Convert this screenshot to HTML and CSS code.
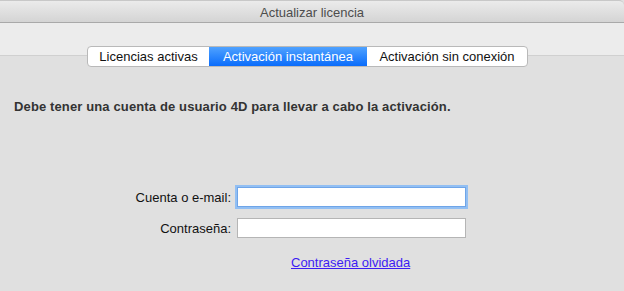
FILE: index.html
```html
<!DOCTYPE html>
<html>
<head>
    <meta charset="utf-8">
    <link rel="stylesheet" href="styles.css">
</head>
<body>
<div id="window">
    <div id="titlebar">Actualizar licencia</div>
    <div id="toolbar"></div>
    <div id="tabs">
        <span class="tab first">Licencias activas</span>
        <span class="tab second selected">Activación instantánea</span>
        <span class="tab third">Activación sin conexión</span>
    </div>
    <div id="content">
        <p class="notice">Debe tener una cuenta de usuario 4D para llevar a cabo la activación.</p>
        <div class="form">
            <div class="row">
                <label class="lbl">Cuenta o e-mail:</label>
                <input class="field focus" type="text"/>
            </div>
            <div class="row">
                <label class="lbl">Contraseña:</label>
                <input class="field" type="password"/>
            </div>
            <div class="row">
                <span class="lbl"></span>
                <a class="forgot" href="#">Contraseña olvidada</a>
            </div>
        </div>
    </div>
</div>
</body>
</html>
```

FILE: styles.css
```css
body {
    margin: 0;
    padding: 0;
    background-color: #e0e0e0;
    font-family: "Liberation Sans", Arial, sans-serif;
    font-size: 13px;
    overflow: hidden;
}

#window {
    position: relative;
    width: 624px;
    height: 291px;
    display: flex;
    flex-direction: column;
}

#titlebar {
    height: 23px;
    line-height: 24px;
    text-align: center;
    color: #4d4d4d;
    background: linear-gradient(#ebebeb, #d4d4d4);
    border-top: 1px solid #c8c8c8;
    border-bottom: 1px solid #a9a9a9;
    border-top-right-radius: 5px;
    box-sizing: border-box;
}

#toolbar {
    height: 32px;
    background-color: #ececec;
    border-bottom: 1px solid #d0d0d0;
}

#tabs {
    position: absolute;
    left: 87px;
    top: 46px;
    display: flex;
    height: 21px;
    border: 1px solid #b9b9b9;
    border-radius: 4px;
    background-color: white;
    box-sizing: border-box;
    overflow: hidden;
}

.tab {
    line-height: 19px;
    text-align: center;
    color: #111;
}

.tab.first {
    width: 121px;
}

.tab.second {
    width: 158px;
}

.tab.third {
    width: 160px;
}

.tab.selected {
    color: white;
    background: linear-gradient(#4fa2ff, #0a6cfb);
}

#content {
    flex: 1;
    padding-left: 14px;
}

.notice {
    margin: 43px 0 0 0;
    font-weight: bold;
    color: #333333;
    letter-spacing: 0.13px;
}

.form {
    margin-top: 73px;
    display: flex;
    flex-direction: column;
    gap: 11px;
}

.row {
    display: flex;
    align-items: center;
}

.lbl {
    width: 217px;
    text-align: right;
    padding-right: 6px;
    color: #111;
}

.field {
    width: 229px;
    height: 20px;
    box-sizing: border-box;
    margin: 0;
    border: 1px solid #b5b5b5;
    background-color: white;
    outline: none;
}

.field.focus {
    border-color: #6fa5e8;
    box-shadow: 0 0 0 2px #92bff3;
}

.forgot {
    margin-left: 54px;
    margin-top: 6px;
    color: #3d1cf3;
    text-decoration: underline;
}
```
